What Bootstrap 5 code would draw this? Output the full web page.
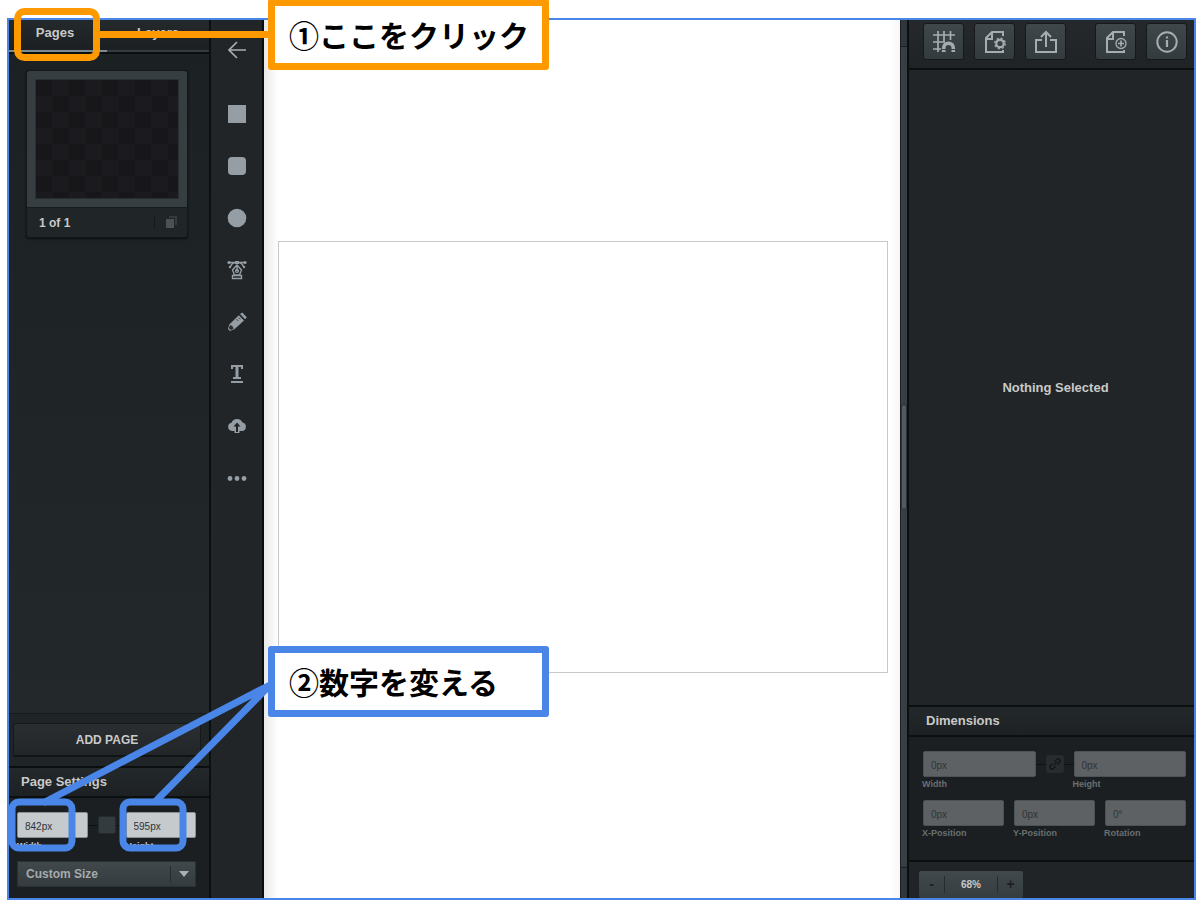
<!DOCTYPE html>
<html lang="ja">
<head>
<meta charset="utf-8">
<meta name="viewport" content="width=device-width, initial-scale=1">
<title>Page editor</title>
<link href="https://cdn.jsdelivr.net/npm/bootstrap@5.3.0/dist/css/bootstrap.min.css" rel="stylesheet">
<style>
  :root { --blue: #4a86e8; --orange: #ff9900; --line: #0c0f10; --ink: #c9c9c9; --icon: #959ea5; }
  body { font-family: "Liberation Sans", Arial, sans-serif; font-size: 13px; color: var(--ink); background: #fff; }
  button { border: 0; background: none; padding: 0; color: inherit; }
  svg { display: block; }
  .stage { padding: 18px 4px 6px 7px; }
  .editor { border: 2px solid var(--blue); }
  .side-left { width: 202px; background: linear-gradient(#1b2022, #23282a 80%); border-right: 2px solid var(--line); }
  .tabbar { height: 34px; background: linear-gradient(#24292b, #1b1f21); border-bottom: 2px solid var(--line); }
  .tabbar button { font-weight: 700; height: 32px; padding-bottom: 4px; border-bottom: 2px solid #353c3f; }
  .tabbar button.active { border-bottom-color: #7c8b91; flex: 0 0 98px; padding-right: 6px; }
  .thumb { margin: 16px 21px 0 17px; background: #202527; border: 1px solid #14181a; border-radius: 3px; box-shadow: 0 1px 2px #0b0d0e; }
  .thumb-frame { background: #363e41; padding: 8px; border-radius: 3px 3px 0 0; }
  .checks { height: 120px; border: 1px solid #2a2f33; background: repeating-conic-gradient(#1b1a1e 0 25%, #171719 0 50%) 0 0 / 33px 32px; }
  .thumb-foot { height: 30px; padding: 0 10px 0 12px; font-size: 12px; font-weight: 700; border-top: 1px solid #171b1d; }
  .thumb-foot button { border-left: 1px solid #171b1d; padding-left: 11px; }
  .add-area { border-top: 1px solid #171b1d; padding: 9px 8px 9px 4px; background: #1f2426; }
  .add-btn { height: 34px; font-weight: 700; font-size: 12px; background: linear-gradient(#2b2e31, #222629); border: 1px solid #15191a; border-bottom: 2px solid #111415; border-radius: 3px; }
  .section-head { height: 32px; padding-left: 12px; font-size: 13px; font-weight: 700; margin: 0; background: linear-gradient(#23282a, #1d2123); border-top: 2px solid var(--line); border-bottom: 2px solid var(--line); }
  .side-right .section-head { padding-left: 17px; }
  .fields { background: #1b1f21; font-size: 10px; padding: 14px 13px 11px 8px; }
  .fields.off { padding: 14px 8px 19px 14px; }
  .fields .cell { flex: 1 1 0; min-width: 0; }
  .fields label { display: block; font-size: 9px; font-weight: 700; line-height: 17px; }
  .fields input { display: block; width: 100%; height: 26px; padding: 2px 7px 0; border: 1px solid #8b9093; border-radius: 2px; background: #c5cacd; color: #2e3335; font-size: 10px; }
  .off input { background: #5d6164; border-color: #4d5255; color: #2f3436; }
  .off label { color: #6a6f72; margin-left: -1px; line-height: 15px; }
  .fields.off input { background: #5d6164; border-color: #4d5255; color: #2f3436; }
  .fields.off label { line-height: 15px; }
  .trio { gap: 10px; margin-top: 8px; }
  .joint { flex: 0 0 38px; height: 26px; background: linear-gradient(#0f1213, #0f1213) center / 100% 1px no-repeat; }
  .joint button { width: 18px; height: 18px; background: #343b3f; border: 1px solid #252b2d; border-radius: 2px; color: #14181a; }
  .off .joint button { background: #272c2f; }
  .size-box { height: 26px; margin-top: 6px; background: linear-gradient(#41494d, #343b3e); border-radius: 2px; }
  .size-box select { appearance: none; width: 100%; height: 26px; border: 1px solid #2a3033; border-radius: 2px; background: none; color: #a5aaac; font-size: 12px; font-weight: 700; padding: 0 8px; }
  .size-box span { right: 0; top: 5px; width: 26px; height: 16px; border-left: 1px solid #262b2e; pointer-events: none; color: #aab0b3; }
  .toolcol { width: 53px; background: #212527; border-right: 2px solid #090b0c; padding-top: 20px; gap: 32px; color: var(--icon); }
  .toolcol button { width: 20px; height: 20px; }
  .toolcol button:first-child { margin-bottom: 12px; }
  .board { background: linear-gradient(90deg, #e8e8e8, #fff 14px, #fff calc(100% - 10px), #f6f6f6); padding: 0 12px 4px 14px; }
  .artboard { aspect-ratio: 842 / 595; background: #fff; border: 1px solid #c8c8c8; }
  .scroller { width: 9px; background: #30373a; border-left: 1px solid #1c2022; border-right: 2px solid #0c0f10; padding: 26px 0 30px; }
  .scroller .rail { background: #383f42; border-top: 1px solid #171b1d; border-bottom: 1px solid #171b1d; }
  .scroller .grip { height: 104px; width: 4px; border-radius: 3px; background: #515b5f; border: 1px solid #2c3235; box-sizing: content-box; }
  .side-right { width: 285px; background: #212527; }
  .topbar { height: 50px; padding: 3px 7px 0 14px; border-bottom: 2px solid var(--line); gap: 10px; background: linear-gradient(#25292c, #1f2325); }
  .tool-btn { width: 41px; height: 37px; background: linear-gradient(#3f474b, #343b3f); border: 1px solid #15191b; border-radius: 3px; color: #a6adb0; }
  .zoom-area { height: 38px; padding: 9px 10px 0; border-top: 2px solid var(--line); background: #202426; }
  .zoomer { width: 104px; height: 27px; background: linear-gradient(#41494d, #363d41); border-radius: 2px; font-size: 10px; font-weight: 700; }
  .zoomer button { width: 25px; font-size: 14px; font-weight: 700; color: #1c2022; }
  .zoomer output { border: solid #262b2e; border-width: 0 1px; line-height: 17px; }
  .callout { width: 281px; height: 71px; border: 7px solid; border-radius: 3px; background: #fff; padding: 0 14px 2px; left: 268px; }
  .callout span { color: #000; font: 700 30px/44px "Noto Sans CJK JP", sans-serif; white-space: nowrap; }
  .callout-a { top: -1px; border-color: var(--orange); }
  .callout-b { bottom: 189px; border-color: var(--blue); }
  .marks { left: 0; pointer-events: none; }
</style>
</head>
<body>
<div class="stage vh-100 position-relative overflow-hidden">
  <div class="editor d-flex h-100">
    <aside class="side-left d-flex flex-column flex-shrink-0">
      <div class="tabbar d-flex" role="tablist">
        <button type="button" role="tab" class="active" aria-selected="true">Pages</button>
        <button type="button" role="tab" class="flex-grow-1" aria-selected="false">Layers</button>
      </div>
      <div class="thumb">
        <div class="thumb-frame"><div class="checks"></div></div>
        <div class="thumb-foot d-flex align-items-center justify-content-between">
          <span>1 of 1</span>
          <button type="button" aria-label="Duplicate page"><svg width="11" height="13"><path d="M3 0h8v9H9V2H3z" fill="#343b3e"/><path d="M0 3h8v9H0z" fill="#4a5256"/></svg></button>
        </div>
      </div>
      <div class="add-area mt-auto"><button type="button" class="add-btn w-100">ADD PAGE</button></div>
      <h2 class="section-head d-flex align-items-center">Page Settings</h2>
      <div class="fields">
        <div class="d-flex">
          <div class="cell"><input id="pw" value="842px"><label for="pw">Width</label></div>
          <div class="joint d-flex align-items-center justify-content-center"><button type="button" aria-label="Lock proportions"></button></div>
          <div class="cell"><input id="ph" value="595px"><label for="ph">Height</label></div>
        </div>
        <div class="size-box position-relative">
          <select aria-label="Page size"><option>Custom Size</option></select>
          <span class="position-absolute d-flex align-items-center justify-content-center"><svg width="12" height="6"><path d="M1 0h10L6 6z" fill="currentColor"/></svg></span>
        </div>
      </div>
    </aside>

    <nav class="toolcol d-flex flex-column align-items-center flex-shrink-0" aria-label="Tools">
      <button type="button" aria-label="Back"><svg width="20" height="20" fill="none" stroke="#a8adb0" stroke-width="1.700"><path d="M19 10H2M10 2L2 10l8 8"/></svg></button>
      <button type="button" aria-label="Rectangle"><svg width="20" height="20" fill="currentColor"><path d="M1 1h18v18H1z"/></svg></button>
      <button type="button" aria-label="Rounded rectangle"><svg width="20" height="20" fill="currentColor"><rect x="1" y="1" width="18" height="18" rx="4"/></svg></button>
      <button type="button" aria-label="Ellipse"><svg width="20" height="20" fill="currentColor"><circle cx="10" cy="10" r="9.300"/></svg></button>
      <button type="button" aria-label="Pen"><svg width="20" height="20" fill="none" stroke="currentColor" stroke-width="1.400"><path d="M2.500 2.500h15M3.500 6.500Q5 3 8 2.500M16.500 6.500Q15 3 12 2.500M10 5v6M10 5L5.500 10l2 5h5l2-5zM5.500 15.500h9v3h-9z"/><circle cx="10" cy="11" r="1.400"/><g fill="currentColor" stroke="none"><path d="M8 1h4v3H8z"/><circle cx="2" cy="2.500" r="1.600"/><circle cx="18" cy="2.500" r="1.600"/><circle cx="3" cy="7" r="1.200"/><circle cx="17" cy="7" r="1.200"/></g></svg></button>
      <button type="button" aria-label="Pencil"><svg width="20" height="20" fill="currentColor"><path d="M11.800 3.200l5.200 5.200-9.600 8.800L3 19l-2-2 1.300-4.600zM13 2l2.200-1.500 4.600 4.700-1.700 2z"/><path d="M3 13.200q3.200.3 3.600 3.600L4.200 18Q1.800 17.500 2 15.600z" fill="#2a3033"/><path d="M9 7.500l2.500 1M11.500 6l2 1" stroke="#4a5258" stroke-width="1"/></svg></button>
      <button type="button" aria-label="Text"><svg width="20" height="20" fill="currentColor"><path d="M4 1h12v4h-2V3h-2.500v10H14v2H6v-2h2.500V3H6v2H4zM4 17h12v2H4z"/></svg></button>
      <button type="button" aria-label="Upload"><svg width="20" height="20" fill="currentColor"><path d="M5 15a4.200 4.200 0 0 1-.5-8.300A6 6 0 0 1 15.400 6.500 4.300 4.300 0 0 1 15 15h-2.500v2h-5v-2z"/><path d="M10 6.500l3.500 4H11V16H9v-5.500H6.500z" fill="#212527"/></svg></button>
      <button type="button" aria-label="More"><svg width="20" height="20" fill="currentColor"><circle cx="3" cy="10.500" r="2.400"/><circle cx="10" cy="10.500" r="2.400"/><circle cx="17" cy="10.500" r="2.400"/></svg></button>
    </nav>

    <main class="board flex-grow-1 d-flex align-items-center"><div class="artboard w-100"></div></main>
    <div class="scroller flex-shrink-0"><div class="rail h-100 d-flex align-items-center justify-content-center"><div class="grip"></div></div></div>

    <aside class="side-right d-flex flex-column flex-shrink-0">
      <div class="topbar d-flex">
        <button type="button" class="tool-btn d-flex align-items-center justify-content-center" aria-label="Snap to grid"><svg width="24" height="24" fill="none" stroke="currentColor" stroke-width="1.700"><path d="M1 5h22M1 12h12M1 19h8M6 1v21M12 1v11M18.500 1v9"/><path d="M11.700 22v-4a4.800 4.800 0 0 1 9.600 0v4" stroke-width="3.600"/><path d="M9 19.500h14" stroke="#3a4145" stroke-width="1"/></svg></button>
        <button type="button" class="tool-btn d-flex align-items-center justify-content-center" aria-label="Document settings"><svg width="24" height="24" fill="none" stroke="currentColor" stroke-width="2"><path d="M20 6V2H9L3 8v14h17v-2M9 3v6H4"/><circle cx="17" cy="13.500" r="3.700" stroke-width="2.200"/><circle cx="17" cy="13.500" r="5.200" stroke-width="1.500" stroke-dasharray="2 2.084"/></svg></button>
        <button type="button" class="tool-btn d-flex align-items-center justify-content-center" aria-label="Export"><svg width="24" height="24" fill="none" stroke="currentColor" stroke-width="2"><path d="M8 10H2v12h20V10h-6M12 17V3M7 7l5-5 5 5"/></svg></button>
        <button type="button" class="tool-btn d-flex align-items-center justify-content-center ms-auto" aria-label="Add document"><svg width="24" height="24" fill="none" stroke="currentColor" stroke-width="2"><path d="M20 6V2H9L3 8v14h17v-2M9 3v6H4"/><circle cx="17" cy="13.500" r="5" stroke-width="1.300"/><path d="M17 10.500v6M14 13.500h6" stroke-width="1.700"/></svg></button>
        <button type="button" class="tool-btn d-flex align-items-center justify-content-center" aria-label="Information"><svg width="24" height="24" fill="none" stroke="currentColor" stroke-width="2"><circle cx="12" cy="12" r="9.700"/><path d="M12 10v7M12 6.500v2" stroke-width="2.200"/></svg></button>
      </div>
      <div class="flex-grow-1 d-flex align-items-center justify-content-center fw-bold ps-2">Nothing Selected</div>
      <h2 class="section-head d-flex align-items-center">Dimensions</h2>
      <div class="fields off">
        <div class="d-flex">
          <div class="cell"><input id="dw" value="0px" disabled><label for="dw">Width</label></div>
          <div class="joint d-flex align-items-center justify-content-center"><button type="button" aria-label="Lock proportions" disabled><svg width="16" height="16" fill="none" stroke="currentColor" stroke-width="1.500"><path d="M7 9l3-3M7.500 5.500l2-2a2 2 0 0 1 3 3l-2 2M8.500 10.500l-2 2a2 2 0 0 1-3-3l2-2"/></svg></button></div>
          <div class="cell"><input id="dh" value="0px" disabled><label for="dh">Height</label></div>
        </div>
        <div class="d-flex trio">
          <div class="cell"><input id="dx" value="0px" disabled><label for="dx">X-Position</label></div>
          <div class="cell"><input id="dy" value="0px" disabled><label for="dy">Y-Position</label></div>
          <div class="cell"><input id="dr" value="0°" disabled><label for="dr">Rotation</label></div>
        </div>
      </div>
      <div class="zoom-area">
        <div class="zoomer d-flex align-items-center">
          <button type="button" aria-label="Zoom out">-</button>
          <output class="flex-grow-1 text-center">68%</output>
          <button type="button" aria-label="Zoom in">+</button>
        </div>
      </div>
    </aside>
  </div>

  <!-- tutorial notes drawn over the editor -->
  <svg class="marks position-absolute top-0" width="280" height="80" fill="none" stroke="#ff9900" stroke-width="7"><rect x="17.500" y="11.500" width="79" height="46" rx="7"/><path d="M97 34.500h175"/></svg>
  <svg class="marks position-absolute bottom-0" width="280" height="260" fill="none" stroke="#4a86e8" stroke-width="7"><path d="M43 157L270 39M154 157L270 39"/><rect x="12" y="156" width="60" height="46" rx="7"/><rect x="123" y="156" width="60" height="46" rx="7"/></svg>
  <div class="callout callout-a position-absolute d-flex align-items-center"><span>①ここをクリック</span></div>
  <div class="callout callout-b position-absolute d-flex align-items-center"><span>②数字を変える</span></div>
</div>
<script src="https://cdn.jsdelivr.net/npm/bootstrap@5.3.0/dist/js/bootstrap.bundle.min.js"></script>
</body>
</html>
